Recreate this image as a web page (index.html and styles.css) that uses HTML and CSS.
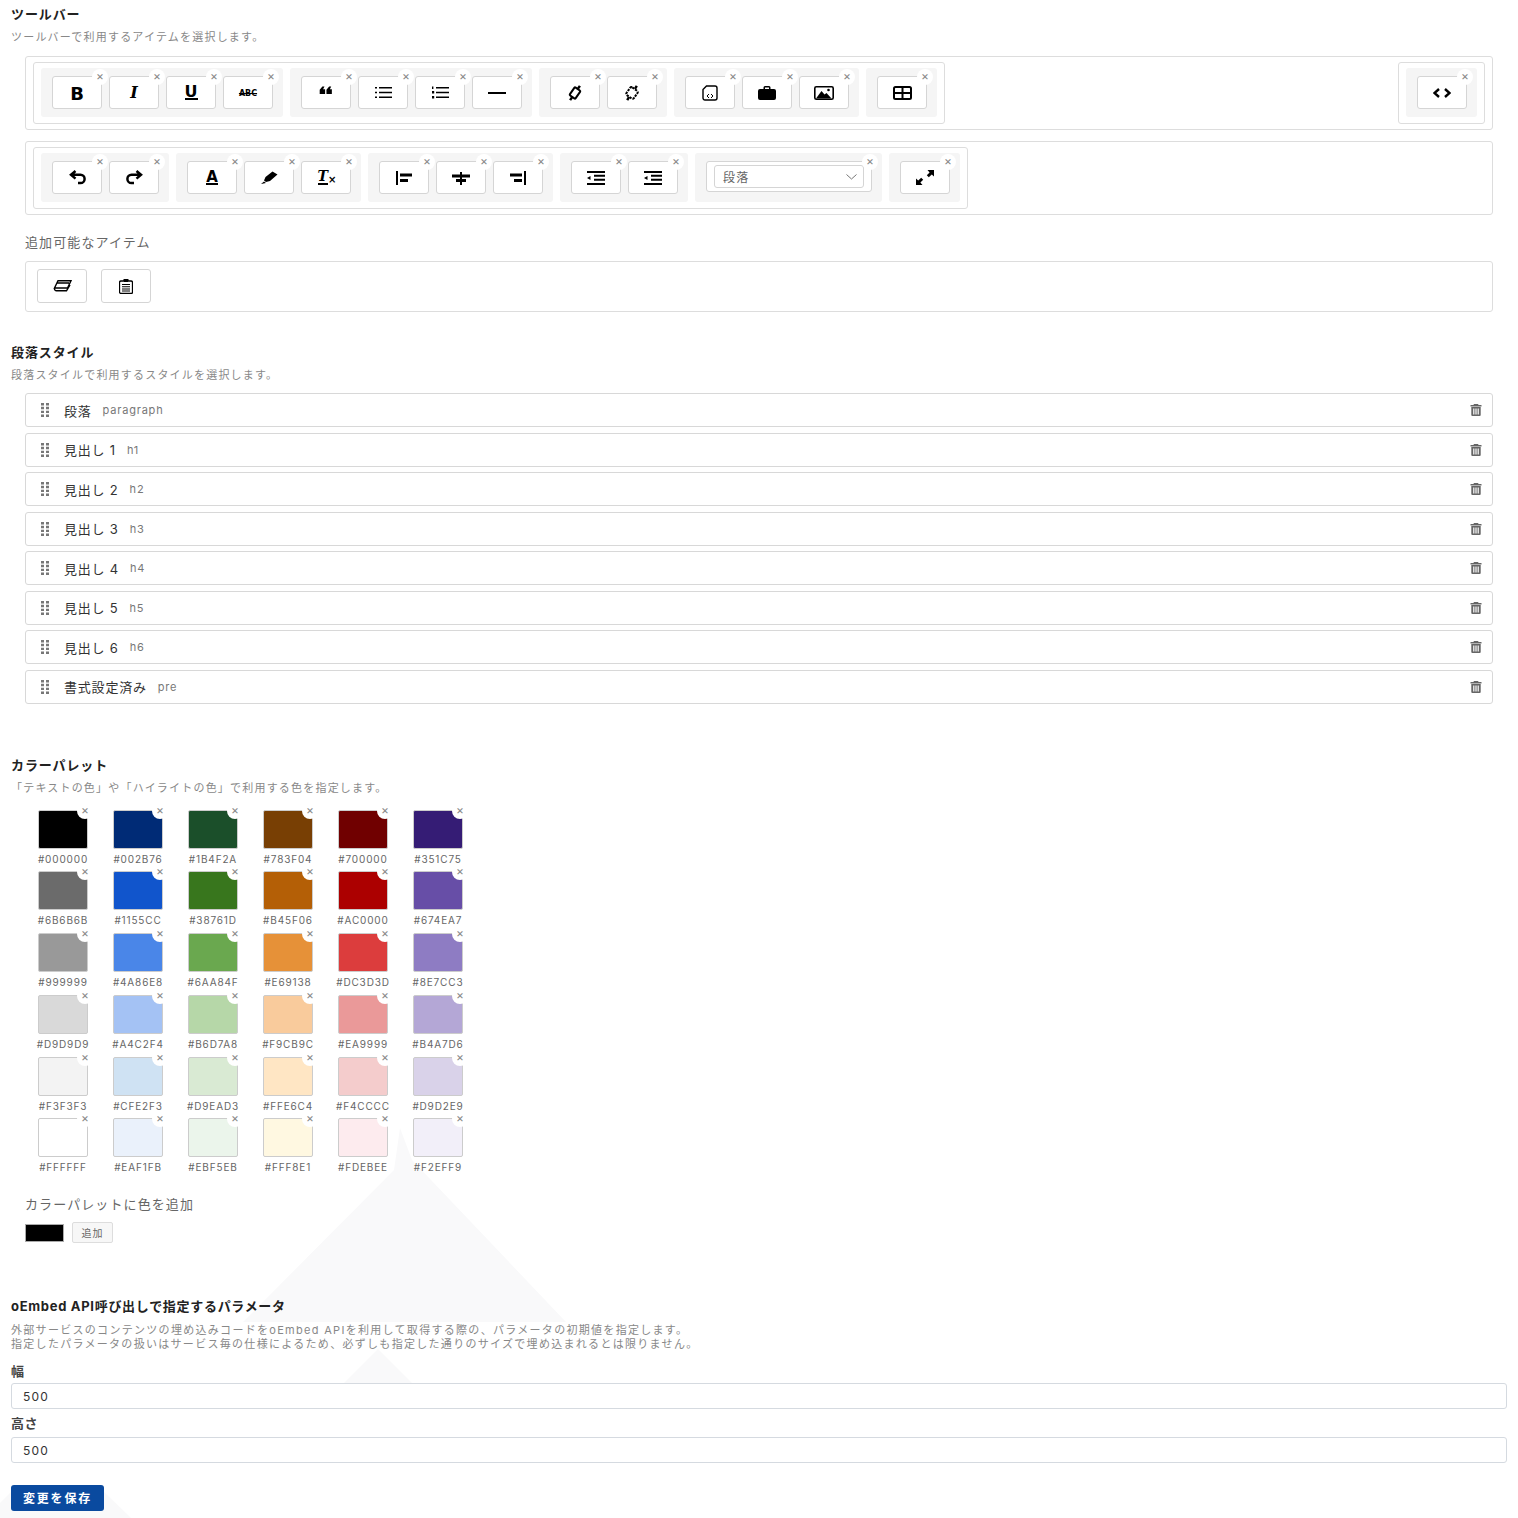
FILE: index.html
```html
<!DOCTYPE html>
<html lang="ja">
<head>
    <meta charset="UTF-8">
    <meta name="viewport" content="width=device-width, initial-scale=1.0">
    <title>エディタ設定</title>
    <link rel="stylesheet" href="styles.css">
</head>
<body>
    <svg class="sprite" aria-hidden="true">
        <symbol id="i-trash" viewBox="0 0 12 12"><path fill-rule="evenodd" d="M4 0h4l.6 1h2.900v1.400H.5V1h2.900zM1.300 3h9.400v8a1 1 0 0 1-1 1H2.300a1 1 0 0 1-1-1zM3.200 4.600v5.900h1.200V4.600zM5.400 4.600v5.900h1.200V4.600zM7.600 4.600v5.900h1.200V4.600z"/></symbol>
        <symbol id="i-drag" viewBox="0 0 8 14"><path d="M0 0h3v2.400H0zM5 0h3v2.400H5zM0 3.800h3v2.400H0zM5 3.800h3v2.400H5zM0 7.700h3v2.400H0zM5 7.700h3v2.400H5zM0 11.600h3V14H0zM5 11.600h3V14H5z"/></symbol>
        <symbol id="i-indent" viewBox="0 0 18 14"><path d="M0 0h18v2H0zM7 3.800h11v2H7zM7 7.800h11v2H7zM0 12h18v2H0zM0 6.900l3.500-2v4z"/></symbol>
    </svg>

    <svg class="backdrop" aria-hidden="true" viewBox="0 0 1518 1518">
        <path d="M400 1128L412 1160 566 1322H243L394 1170z"/>
        <path d="M378 1349L414 1385H342z"/>
        <path d="M0 1503L11 1492H104L131 1518H0z"/>
    </svg>

    <main class="page">
        <section>
            <h2>ツールバー</h2>
            <p class="desc">ツールバーで利用するアイテムを選択します。</p>

            <div class="toolbar-box spread">
                <div class="toolbar-inner">
                    <div class="tool-group">
                        <div class="tool"><span class="glyph-b">B</span><span class="close">×</span></div>
                        <div class="tool"><span class="glyph-i">I</span><span class="close">×</span></div>
                        <div class="tool"><span class="glyph-u">U</span><span class="close">×</span></div>
                        <div class="tool"><span class="glyph-s">ABC</span><span class="close">×</span></div>
                    </div>
                    <div class="tool-group">
                        <div class="tool"><svg class="raised" width="14" height="9" viewBox="0 0 14 10"><path d="M3 .5h2.300L3.800 3.600H6V9H0V4.200zM10.500 .5h2.300l-1.500 3.100h2.200V9H7.500V4.200z"/></svg><span class="close">×</span></div>
                        <div class="tool"><svg width="17" height="13" viewBox="0 0 17 13"><path d="M0 1h2v1.500H0zM0 5.800h2v1.500H0zM0 10.500h2V12H0zM4 1h13v1.500H4zM4 5.800h13v1.500H4zM4 10.500h13V12H4z"/></svg><span class="close">×</span></div>
                        <div class="tool"><svg width="17" height="13" viewBox="0 0 17 13"><path d="M0 .5h1.400v2.500H0zM0 5h2.200v2.500H0zM0 10h2.200v2.500H0zM4 1h13v1.500H4zM4 5.800h13v1.500H4zM4 10.500h13V12H4z"/></svg><span class="close">×</span></div>
                        <div class="tool"><svg width="18" height="2" viewBox="0 0 18 2"><path d="M0 0h18v2H0z"/></svg><span class="close">×</span></div>
                    </div>
                    <div class="tool-group">
                        <div class="tool"><svg width="16" height="16" viewBox="0 0 16 16"><rect x="4.500" y="3.200" width="7" height="9.600" rx="1" fill="none" stroke="#000" stroke-width="2" transform="rotate(35 8 8)"/><path d="M10.800 3.900l2.100-3M5.200 12.100l-2.100 3" fill="none" stroke="#000" stroke-width="2.500"/></svg><span class="close">×</span></div>
                        <div class="tool"><svg width="18" height="16" viewBox="0 0 18 16"><rect x="4.500" y="3.300" width="9" height="9.400" rx="1.500" fill="none" stroke="#000" stroke-width="2" stroke-dasharray="2.400 1" transform="rotate(35 9 8)"/><path d="M12 3.800l1.800-2.900M6 12.200l-1.800 2.900" fill="none" stroke="#000" stroke-width="2.500"/></svg><span class="close">×</span></div>
                    </div>
                    <div class="tool-group">
                        <div class="tool"><svg width="16" height="16" viewBox="0 0 16 16"><path d="M4.500 1H13a2 2 0 0 1 2 2v10a2 2 0 0 1-2 2H3a2 2 0 0 1-2-2V4.500z" fill="none" stroke="#000" stroke-width="1.400"/><path d="M7 9l-2 2 2 2M9 9l2 2-2 2" fill="none" stroke="#000"/></svg><span class="close">×</span></div>
                        <div class="tool"><svg width="18" height="14" viewBox="0 0 18 14"><path fill-rule="evenodd" d="M5.500 3V1.500A1.500 1.500 0 0 1 7 0h4a1.500 1.500 0 0 1 1.500 1.500V3H16a2 2 0 0 1 2 2v7a2 2 0 0 1-2 2H2a2 2 0 0 1-2-2V5a2 2 0 0 1 2-2zM7 3h4V1.400H7z"/></svg><span class="close">×</span></div>
                        <div class="tool"><svg width="20" height="14" viewBox="0 0 20 14"><rect x=".8" y=".8" width="18.400" height="12.400" rx="1.500" fill="none" stroke="#000" stroke-width="1.600"/><path d="M2 12.500L7.500 5l3 3.500 2-1.500 5 5.500z"/><circle cx="14.500" cy="4" r="1.300"/></svg><span class="close">×</span></div>
                    </div>
                    <div class="tool-group">
                        <div class="tool"><svg width="19" height="14" viewBox="0 0 19 14"><rect x="1" y="1" width="17" height="12" rx="1.500" fill="none" stroke="#000" stroke-width="2"/><path d="M0 6h19v2H0zM8.500 1h2v12h-2z"/></svg><span class="close">×</span></div>
                    </div>
                </div>
                <div class="toolbar-inner">
                    <div class="tool-group">
                        <div class="tool"><svg width="18" height="10" viewBox="0 0 18 10"><path d="M6 1L1.500 5 6 9M12 1l4.500 4L12 9" fill="none" stroke="#000" stroke-width="2.400"/></svg><span class="close">×</span></div>
                    </div>
                </div>
            </div>

            <div class="toolbar-box">
                <div class="toolbar-inner">
                    <div class="tool-group">
                        <div class="tool"><svg width="17" height="15" viewBox="0 0 17 15"><path d="M6.500 1L2 4.800l4.500 3.800M2 4.800h9.500a3.900 3.900 0 0 1 0 8.200H9" fill="none" stroke="#000" stroke-width="2.500"/></svg><span class="close">×</span></div>
                        <div class="tool"><svg width="17" height="15" viewBox="0 0 17 15"><path d="M10.500 1L15 4.800l-4.500 3.800M15 4.800H5.500a3.900 3.900 0 0 0 0 8.200H8" fill="none" stroke="#000" stroke-width="2.500"/></svg><span class="close">×</span></div>
                    </div>
                    <div class="tool-group">
                        <div class="tool"><span class="glyph-a">A</span><span class="close">×</span></div>
                        <div class="tool"><svg width="17" height="13" viewBox="0 0 17 13"><path d="M11.500 .5L16.500 3.500 9 10 5 11 3 9.500 4.500 6zM3 10.500L5 12 0 13z"/></svg><span class="close">×</span></div>
                        <div class="tool"><span class="glyph-t"><span class="t-letter">T</span><small>×</small></span><span class="close">×</span></div>
                    </div>
                    <div class="tool-group">
                        <div class="tool"><svg width="16" height="14" viewBox="0 0 16 14"><path d="M0 0h2v14H0zM4 2.500h12v3H4zM4 8h8v3H4z"/></svg><span class="close">×</span></div>
                        <div class="tool"><svg width="18" height="14" viewBox="0 0 18 14"><path d="M0 3.500h18v3H0zM4 8h10v3H4zM8 1h2v13H8z"/></svg><span class="close">×</span></div>
                        <div class="tool"><svg width="16" height="14" viewBox="0 0 16 14"><path d="M14 0h2v14h-2zM0 2.500h12v3H0zM4 8h8v3H4z"/></svg><span class="close">×</span></div>
                    </div>
                    <div class="tool-group">
                        <div class="tool"><svg width="18" height="14"><use href="#i-indent"/></svg><span class="close">×</span></div>
                        <div class="tool"><svg width="18" height="14"><use href="#i-indent"/></svg><span class="close">×</span></div>
                    </div>
                    <div class="tool-group">
                        <div class="tool tool-select">
                            <div class="select"><span>段落</span><svg width="11" height="6" viewBox="0 0 11 6"><path d="M.5 .5l5 4.500 5-4.500" fill="none" stroke="#777"/></svg></div>
                            <span class="close">×</span>
                        </div>
                    </div>
                    <div class="tool-group">
                        <div class="tool"><svg width="18" height="15" viewBox="0 0 18 15"><path d="M18 0v6.500l-2.200-2-3 2.800-2-2L13.600 2.500 11.500 0zM0 15V8.500l2.200 2 3-2.800 2 2-2.800 2.800L6.500 15z"/></svg><span class="close">×</span></div>
                    </div>
                </div>
            </div>

            <p class="sub-label">追加可能なアイテム</p>
            <div class="available-box">
                <div class="tool"><svg width="19" height="12" viewBox="0 0 19 12"><path d="M5 .8H18L14.500 8H1.500zM3.500 3H16M1.500 8v.500a2 2 0 0 0 2 2.300h10l3.500-6" fill="none" stroke="#000" stroke-width="1.400"/></svg></div>
                <div class="tool"><svg width="14" height="15" viewBox="0 0 14 15"><path d="M5 2V1h4v1h3a1.500 1.500 0 0 1 1.500 1.500V13a1.500 1.500 0 0 1-1.500 1.500H2A1.500 1.500 0 0 1 .5 13V3.500A1.500 1.500 0 0 1 2 2z" fill="none" stroke="#000" stroke-width="1.300"/><path d="M3 5h8v1H3zM3 7.300h8v1H3zM3 9.600h8v1H3zM3 11.600h8v1H3zM5 0h4v3H5z"/></svg></div>
            </div>
        </section>

        <section class="styles-section">
            <h2>段落スタイル</h2>
            <p class="desc">段落スタイルで利用するスタイルを選択します。</p>
            <ul class="style-list">
                <li class="style-row"><svg class="drag" width="8" height="14"><use href="#i-drag"/></svg><span class="style-name">段落</span><span class="style-tag">paragraph</span><svg class="trash" width="12" height="12"><use href="#i-trash"/></svg></li>
                <li class="style-row"><svg class="drag" width="8" height="14"><use href="#i-drag"/></svg><span class="style-name">見出し 1</span><span class="style-tag">h1</span><svg class="trash" width="12" height="12"><use href="#i-trash"/></svg></li>
                <li class="style-row"><svg class="drag" width="8" height="14"><use href="#i-drag"/></svg><span class="style-name">見出し 2</span><span class="style-tag">h2</span><svg class="trash" width="12" height="12"><use href="#i-trash"/></svg></li>
                <li class="style-row"><svg class="drag" width="8" height="14"><use href="#i-drag"/></svg><span class="style-name">見出し 3</span><span class="style-tag">h3</span><svg class="trash" width="12" height="12"><use href="#i-trash"/></svg></li>
                <li class="style-row"><svg class="drag" width="8" height="14"><use href="#i-drag"/></svg><span class="style-name">見出し 4</span><span class="style-tag">h4</span><svg class="trash" width="12" height="12"><use href="#i-trash"/></svg></li>
                <li class="style-row"><svg class="drag" width="8" height="14"><use href="#i-drag"/></svg><span class="style-name">見出し 5</span><span class="style-tag">h5</span><svg class="trash" width="12" height="12"><use href="#i-trash"/></svg></li>
                <li class="style-row"><svg class="drag" width="8" height="14"><use href="#i-drag"/></svg><span class="style-name">見出し 6</span><span class="style-tag">h6</span><svg class="trash" width="12" height="12"><use href="#i-trash"/></svg></li>
                <li class="style-row"><svg class="drag" width="8" height="14"><use href="#i-drag"/></svg><span class="style-name">書式設定済み</span><span class="style-tag">pre</span><svg class="trash" width="12" height="12"><use href="#i-trash"/></svg></li>
            </ul>
        </section>

        <section class="palette-section">
            <h2>カラーパレット</h2>
            <p class="desc">「テキストの色」や「ハイライトの色」で利用する色を指定します。</p>
            <div class="palette">
                <div class="color"><div class="swatch" style="background:#000000"><span class="close">×</span></div><span class="code">#000000</span></div>
                <div class="color"><div class="swatch" style="background:#002B76"><span class="close">×</span></div><span class="code">#002B76</span></div>
                <div class="color"><div class="swatch" style="background:#1B4F2A"><span class="close">×</span></div><span class="code">#1B4F2A</span></div>
                <div class="color"><div class="swatch" style="background:#783F04"><span class="close">×</span></div><span class="code">#783F04</span></div>
                <div class="color"><div class="swatch" style="background:#700000"><span class="close">×</span></div><span class="code">#700000</span></div>
                <div class="color"><div class="swatch" style="background:#351C75"><span class="close">×</span></div><span class="code">#351C75</span></div>
                <div class="color"><div class="swatch" style="background:#6B6B6B"><span class="close">×</span></div><span class="code">#6B6B6B</span></div>
                <div class="color"><div class="swatch" style="background:#1155CC"><span class="close">×</span></div><span class="code">#1155CC</span></div>
                <div class="color"><div class="swatch" style="background:#38761D"><span class="close">×</span></div><span class="code">#38761D</span></div>
                <div class="color"><div class="swatch" style="background:#B45F06"><span class="close">×</span></div><span class="code">#B45F06</span></div>
                <div class="color"><div class="swatch" style="background:#AC0000"><span class="close">×</span></div><span class="code">#AC0000</span></div>
                <div class="color"><div class="swatch" style="background:#674EA7"><span class="close">×</span></div><span class="code">#674EA7</span></div>
                <div class="color"><div class="swatch" style="background:#999999"><span class="close">×</span></div><span class="code">#999999</span></div>
                <div class="color"><div class="swatch" style="background:#4A86E8"><span class="close">×</span></div><span class="code">#4A86E8</span></div>
                <div class="color"><div class="swatch" style="background:#6AA84F"><span class="close">×</span></div><span class="code">#6AA84F</span></div>
                <div class="color"><div class="swatch" style="background:#E69138"><span class="close">×</span></div><span class="code">#E69138</span></div>
                <div class="color"><div class="swatch" style="background:#DC3D3D"><span class="close">×</span></div><span class="code">#DC3D3D</span></div>
                <div class="color"><div class="swatch" style="background:#8E7CC3"><span class="close">×</span></div><span class="code">#8E7CC3</span></div>
                <div class="color"><div class="swatch" style="background:#D9D9D9"><span class="close">×</span></div><span class="code">#D9D9D9</span></div>
                <div class="color"><div class="swatch" style="background:#A4C2F4"><span class="close">×</span></div><span class="code">#A4C2F4</span></div>
                <div class="color"><div class="swatch" style="background:#B6D7A8"><span class="close">×</span></div><span class="code">#B6D7A8</span></div>
                <div class="color"><div class="swatch" style="background:#F9CB9C"><span class="close">×</span></div><span class="code">#F9CB9C</span></div>
                <div class="color"><div class="swatch" style="background:#EA9999"><span class="close">×</span></div><span class="code">#EA9999</span></div>
                <div class="color"><div class="swatch" style="background:#B4A7D6"><span class="close">×</span></div><span class="code">#B4A7D6</span></div>
                <div class="color"><div class="swatch" style="background:#F3F3F3"><span class="close">×</span></div><span class="code">#F3F3F3</span></div>
                <div class="color"><div class="swatch" style="background:#CFE2F3"><span class="close">×</span></div><span class="code">#CFE2F3</span></div>
                <div class="color"><div class="swatch" style="background:#D9EAD3"><span class="close">×</span></div><span class="code">#D9EAD3</span></div>
                <div class="color"><div class="swatch" style="background:#FFE6C4"><span class="close">×</span></div><span class="code">#FFE6C4</span></div>
                <div class="color"><div class="swatch" style="background:#F4CCCC"><span class="close">×</span></div><span class="code">#F4CCCC</span></div>
                <div class="color"><div class="swatch" style="background:#D9D2E9"><span class="close">×</span></div><span class="code">#D9D2E9</span></div>
                <div class="color"><div class="swatch" style="background:#FFFFFF"><span class="close">×</span></div><span class="code">#FFFFFF</span></div>
                <div class="color"><div class="swatch" style="background:#EAF1FB"><span class="close">×</span></div><span class="code">#EAF1FB</span></div>
                <div class="color"><div class="swatch" style="background:#EBF5EB"><span class="close">×</span></div><span class="code">#EBF5EB</span></div>
                <div class="color"><div class="swatch" style="background:#FFF8E1"><span class="close">×</span></div><span class="code">#FFF8E1</span></div>
                <div class="color"><div class="swatch" style="background:#FDEBEE"><span class="close">×</span></div><span class="code">#FDEBEE</span></div>
                <div class="color"><div class="swatch" style="background:#F2EFF9"><span class="close">×</span></div><span class="code">#F2EFF9</span></div>
            </div>
            <p class="sub-label add-label">カラーパレットに色を追加</p>
            <div class="add-color">
                <span class="add-swatch"></span>
                <button type="button" class="add-button">追加</button>
            </div>
        </section>

        <section class="oembed-section">
            <h2>oEmbed API呼び出しで指定するパラメータ</h2>
            <p class="desc desc-oembed">外部サービスのコンテンツの埋め込みコードをoEmbed APIを利用して取得する際の、パラメータの初期値を指定します。<br>指定したパラメータの扱いはサービス毎の仕様によるため、必ずしも指定した通りのサイズで埋め込まれるとは限りません。</p>
            <label class="field-label" for="oembed-width">幅</label>
            <input class="field" id="oembed-width" type="text" value="500">
            <label class="field-label" for="oembed-height">高さ</label>
            <input class="field" id="oembed-height" type="text" value="500">
            <button type="button" class="save-button">変更を保存</button>
        </section>
    </main>
</body>
</html>
```

FILE: styles.css
```css
body {
    margin: 0;
    background-color: #fff;
    color: #333;
    font-family: Inter, "Noto Sans CJK JP", sans-serif;
}
.sprite {
    display: none;
}
.backdrop {
    position: absolute;
    top: 0;
    left: 0;
    width: 1518px;
    height: 1518px;
    fill: #f9f9fa;
}
.page {
    position: relative;
    height: 1518px;
    box-sizing: border-box;
    padding: 7px 11px 0;
    overflow: hidden;
}
h2 {
    margin: 0;
    font-size: 13px;
    line-height: 14px;
    font-weight: 700;
    letter-spacing: .9px;
    color: #222;
}
.desc {
    margin: 9px 0 0;
    font-size: 11px;
    line-height: 14px;
    letter-spacing: 1.2px;
    color: #888;
}
.sub-label {
    margin: 20px 14px 0;
    font-size: 13px;
    line-height: 14px;
    letter-spacing: 1.1px;
    color: #666;
}

/* toolbar */
.toolbar-box {
    display: flex;
    height: 74px;
    box-sizing: border-box;
    margin: 0 14px 11px;
    padding: 5px 7px;
    border: 1px solid #ddd;
    border-radius: 3px;
}
.spread {
    margin-top: 12px;
    justify-content: space-between;
}
.toolbar-inner {
    display: flex;
    gap: 7px;
    height: 62px;
    box-sizing: border-box;
    padding: 5px 7px;
    border: 1px solid #ddd;
    border-radius: 3px;
}
.tool-group {
    display: flex;
    gap: 7px;
    height: 49px;
    box-sizing: border-box;
    padding: 8px 10px 0 11px;
    background-color: #f5f5f5;
    border-radius: 3px;
}
.tool {
    position: relative;
    display: flex;
    align-items: center;
    justify-content: center;
    width: 50px;
    height: 33px;
    box-sizing: border-box;
    background-color: #fff;
    border: 1px solid #d5d5d5;
    border-radius: 3px;
    color: #000;
}
.close {
    position: absolute;
    top: -8px;
    right: -7px;
    width: 16px;
    height: 16px;
    border-radius: 50%;
    background-color: #fff;
    color: #888;
    font-size: 12px;
    font-weight: 400;
    line-height: 14px;
    text-align: center;
    letter-spacing: 0;
}
.raised {
    margin-bottom: 4px;
}
.glyph-b {
    padding-top: 2px;
    font: 700 18px/1 "DejaVu Sans", sans-serif;
}
.glyph-i {
    padding-top: 1px;
    font: italic 700 16px/1 "DejaVu Serif", serif;
}
.glyph-u {
    font: 700 16px/13px "DejaVu Sans", sans-serif;
    border-bottom: 2px solid #000;
}
.glyph-s {
    padding-top: 2px;
    font: 700 8px/1 "DejaVu Sans", sans-serif;
    text-decoration: line-through;
}
.glyph-a {
    font: 700 15px/12px "DejaVu Sans", sans-serif;
    border-bottom: 2px solid #000;
}
.glyph-t {
    display: flex;
    align-items: flex-end;
    margin-left: 2px;
}
.t-letter {
    font: italic 700 14px/13px "DejaVu Serif", serif;
    border-bottom: 2px solid #000;
}
.glyph-t small {
    font: 700 10px/10px "DejaVu Sans", sans-serif;
}
.tool-select {
    width: 166px;
    height: 31px;
    padding-left: 7px;
    justify-content: flex-start;
}
.select {
    display: flex;
    align-items: center;
    justify-content: space-between;
    width: 150px;
    height: 23px;
    box-sizing: border-box;
    padding: 0 6px 0 8px;
    border: 1px solid #d5d5d5;
    border-radius: 3px;
    font-size: 12px;
    letter-spacing: 1.2px;
    color: #666;
}
.available-box {
    display: flex;
    gap: 14px;
    height: 51px;
    box-sizing: border-box;
    margin: 12px 14px 0;
    padding: 7px 11px;
    border: 1px solid #ddd;
    border-radius: 3px;
}
.available-box .tool {
    height: 34px;
}

/* paragraph styles */
.styles-section {
    margin-top: 33px;
}
.style-list {
    margin: 11px 14px 0;
    padding: 0;
    list-style: none;
}
.style-row {
    display: flex;
    align-items: center;
    height: 34px;
    box-sizing: border-box;
    margin-bottom: 5.5px;
    padding: 0 10px 0 15px;
    border: 1px solid #d8d8d8;
    border-radius: 3px;
}
.drag {
    fill: #777;
    margin-right: 15px;
}
.style-name {
    font-size: 13px;
    letter-spacing: .8px;
    color: #333;
}
.style-tag {
    margin-left: 11px;
    font-size: 11px;
    letter-spacing: .8px;
    color: #777;
}
.trash {
    margin-left: auto;
    fill: #666;
}

/* colour palette */
.palette-section {
    margin-top: 54px;
}
.palette {
    display: grid;
    grid-template-columns: repeat(6, 75px);
    grid-auto-rows: 61.8px;
    width: 450px;
    margin: 15px 0 0 14.5px;
}
.color {
    display: flex;
    flex-direction: column;
    align-items: center;
}
.swatch {
    position: relative;
    width: 50px;
    height: 39px;
    box-sizing: border-box;
    border: 1px solid #ccc;
    border-radius: 2px;
}
.swatch .close {
    top: -8px;
    right: -6px;
}
.code {
    margin-top: 4px;
    font-size: 10px;
    line-height: 13px;
    letter-spacing: .85px;
    color: #666;
}
.add-label {
    margin-top: 17px;
}
.add-color {
    display: flex;
    align-items: center;
    gap: 8px;
    margin: 11px 14px 0;
    height: 21px;
}
.add-swatch {
    width: 39px;
    height: 18px;
    box-sizing: border-box;
    background-color: #000;
    border: 1px solid #aaa;
}
.add-button {
    width: 41px;
    height: 21px;
    padding: 0;
    background-color: #f7f7f7;
    border: 1px solid #ddd;
    border-radius: 2px;
    font-family: inherit;
    font-size: 10px;
    letter-spacing: 1px;
    color: #666;
}

/* oEmbed */
.oembed-section {
    margin-top: 56px;
}
.oembed-section h2 {
    letter-spacing: .7px;
}
.desc-oembed {
    margin-top: 10px;
    letter-spacing: 1.3px;
}
.field-label {
    display: block;
    margin-top: 13px;
    font-size: 13px;
    line-height: 14px;
    font-weight: 700;
    color: #444;
    letter-spacing: .5px;
}
.field {
    display: block;
    width: 100%;
    height: 26px;
    box-sizing: border-box;
    margin-top: 5px;
    padding: 0 11px;
    background-color: #fff;
    border: 1px solid #d5dae0;
    border-radius: 3px;
    font-family: inherit;
    font-size: 12px;
    letter-spacing: 1.2px;
    color: #333;
}
.field + .field-label {
    margin-top: 7px;
    padding-bottom: 2px;
}
.save-button {
    display: block;
    width: 93px;
    height: 26px;
    margin-top: 22px;
    padding: 0 0 2px;
    background-color: #0a4a9f;
    border: 0;
    border-radius: 3px;
    font-family: inherit;
    font-size: 12px;
    font-weight: 700;
    letter-spacing: 1.8px;
    color: #fff;
}
```
